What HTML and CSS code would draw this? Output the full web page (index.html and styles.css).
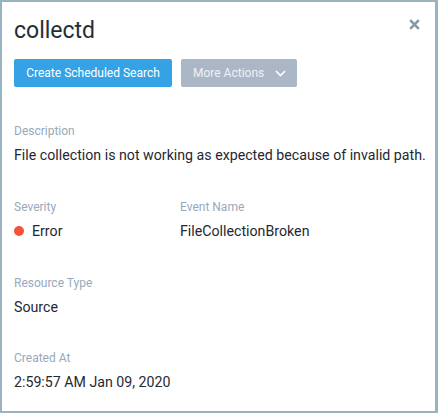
FILE: index.html
```html
<!DOCTYPE html>
<html>
<head>
<meta charset="utf-8">
<link rel="stylesheet" href="styles.css">
</head>
<body>
<div class="panel">
  <div class="header">
    <h1 class="title">collectd</h1>
    <button class="close" aria-label="Close">
      <svg width="11" height="11" viewBox="0 0 11 11"><path d="M1.2 1.2 L9.8 9.8 M9.8 1.2 L1.2 9.8" stroke="#8496ab" stroke-width="2.5" stroke-linecap="butt"/></svg>
    </button>
  </div>
  <div class="actions">
    <button class="btn btn-primary">Create Scheduled Search</button>
    <button class="btn btn-secondary">More Actions
      <svg class="chev" width="11" height="7" viewBox="0 0 11 7"><path d="M1 1 L5.5 5.5 L10 1" fill="none" stroke="#fff" stroke-width="1.6"/></svg>
    </button>
  </div>
  <div class="section">
    <div class="field">
      <div class="label">Description</div>
      <div class="value">File collection is not working as expected because of invalid path.</div>
    </div>
  </div>
  <div class="section row">
    <div class="field col">
      <div class="label">Severity</div>
      <div class="value"><span class="dot"></span>Error</div>
    </div>
    <div class="field col">
      <div class="label">Event Name</div>
      <div class="value">FileCollectionBroken</div>
    </div>
  </div>
  <div class="section">
    <div class="field">
      <div class="label">Resource Type</div>
      <div class="value">Source</div>
    </div>
  </div>
  <div class="section">
    <div class="field">
      <div class="label">Created At</div>
      <div class="value">2:59:57 AM Jan 09, 2020</div>
    </div>
  </div>
</div>
</body>
</html>
```

FILE: styles.css
```css
* { box-sizing: border-box; }
html, body { margin: 0; padding: 0; background: #fff; }
body { font-family: Roboto, "Liberation Sans", sans-serif; }
.panel {
  width: 438px;
  height: 413px;
  border-style: solid;
  border-color: #9ab3c1;
  border-width: 2px 3px 2px 2px;
  padding: 0 12px 0 12px;
  display: flex;
  flex-direction: column;
  overflow: hidden;
}
.panel > * { flex-shrink: 0; }
.header {
  display: flex;
  justify-content: space-between;
  align-items: flex-start;
  height: 57px;
}
.title {
  margin: 0;
  padding-top: 15px;
  font-size: 23px;
  line-height: 28px;
  font-weight: 400;
  color: #252d38;
}
.close {
  border: 0;
  background: none;
  padding: 0;
  margin-top: 17px;
  margin-right: 3px;
  width: 11px;
  height: 11px;
  display: block;
}
.close svg { display: block; }
.actions {
  display: flex;
  gap: 9px;
}
.btn {
  height: 28px;
  border: 0;
  border-radius: 2px;
  font-family: Roboto, "Liberation Sans", sans-serif;
  font-size: 12px;
  color: #fff;
  padding: 0;
  display: flex;
  align-items: center;
  white-space: nowrap;
}
.btn-primary { background: #35a2e5; width: 158px; justify-content: center; }
.btn-secondary { background: #abb7c6; color: #eef1f5; width: 116px; padding-left: 12px; }
.chev { margin-left: 11px; }
.section { margin-top: 35px; }
.actions + .section { margin-top: 36px; }
.section:last-child { margin-top: 34px; }
.row { display: flex; }
.row .col { width: 166px; }
.field { display: flex; flex-direction: column; }
.label {
  font-size: 12px;
  line-height: 16px;
  color: #98a9bc;
}
.value {
  margin-top: 7px;
  font-size: 14.2px;
  line-height: 18px;
  color: #1f2833;
  display: flex;
  align-items: center;
  white-space: nowrap;
}
.dot {
  width: 10px;
  height: 10px;
  border-radius: 50%;
  background: #f4533a;
  margin-right: 8px;
}
```
